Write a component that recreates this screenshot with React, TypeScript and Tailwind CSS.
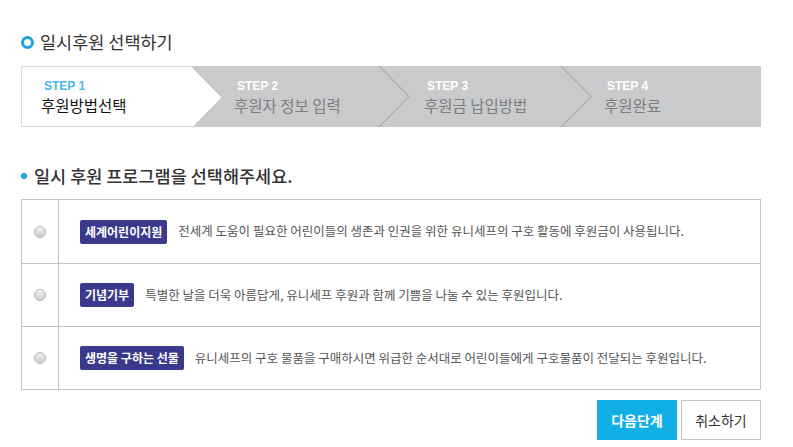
const steps = [
  { no: "STEP 1", label: "후원방법선택", active: true, width: "w-[172px]", pad: "pl-[19px]" },
  { no: "STEP 2", label: "후원자 정보 입력", active: false, width: "w-[187px]", pad: "pl-[41px]" },
  { no: "STEP 3", label: "후원금 납입방법", active: false, width: "w-[182px]", pad: "pl-[44px]" },
  { no: "STEP 4", label: "후원완료", active: false, width: "flex-1", pad: "pl-[42px]" },
];

const programs = [
  {
    badge: "세계어린이지원",
    text: "전세계 도움이 필요한 어린이들의 생존과 인권을 위한 유니세프의 구호 활동에 후원금이 사용됩니다.",
  },
  {
    badge: "기념기부",
    text: "특별한 날을 더욱 아름답게, 유니세프 후원과 함께 기쁨을 나눌 수 있는 후원입니다.",
  },
  {
    badge: "생명을 구하는 선물",
    text: "유니세프의 구호 물품을 구매하시면 위급한 순서대로 어린이들에게 구호물품이 전달되는 후원입니다.",
  },
];

function Chevron({ active }: { active: boolean }) {
  return (
    <svg
      className="absolute top-0 -right-[30px] z-10 h-[61px] w-[31px]"
      viewBox="0 0 31 61"
      preserveAspectRatio="none"
    >
      {active && <polygon points="0,0 30,30.5 0,61" fill="#ffffff" />}
      <polyline
        points="0,0 30,30.5 0,61"
        fill="none"
        stroke={active ? "#b9babc" : "#8c8d8f"}
        strokeWidth="0.8"
      />
    </svg>
  );
}

function Radio() {
  return (
    <span className="block h-[12px] w-[12px] rounded-full border border-[#b5b5b5] bg-gradient-to-b from-[#f2f2f2] to-[#cdcdcd]" />
  );
}

export default function App() {
  return (
    <main className="min-h-[447px] w-[793px] bg-white font-['Noto_Sans_CJK_KR','Noto_Sans',sans-serif] text-[#333]">
      <div className="ml-[21px] w-[740px] pt-[31px]">
        <h1 className="flex items-center gap-[6px] text-[17.5px] leading-[22px] text-[#333]">
          <span className="block h-[13px] w-[13px] rounded-full border-[3px] border-[#1aa3dc]" />
          일시후원 선택하기
        </h1>

        <div className="mt-[13px] flex h-[61px] bg-[#c9cacc]">
          {steps.map((s, i) => (
            <div
              key={s.no}
              className={`relative flex flex-col justify-center ${s.width} ${s.pad} ${
                s.active ? "border-y border-l border-[#dcdcdc] bg-white" : ""
              }`}
            >
              <span
                className={`ml-[3px] font-['Liberation_Sans',sans-serif] text-[12px] font-bold leading-[14px] ${
                  s.active ? "text-[#4cb6e6]" : "text-white"
                }`}
              >
                {s.no}
              </span>
              <span
                className={`mt-[3px] text-[15.5px] leading-[18px] ${
                  s.active ? "text-[#111]" : "text-[#7d7e80]"
                }`}
              >
                {s.label}
              </span>
              {i < steps.length - 1 && <Chevron active={s.active} />}
            </div>
          ))}
        </div>

        <h2 className="mt-[38px] flex items-center gap-[7px] text-[17.5px] font-medium leading-[22px] text-[#333]">
          <span className="block h-[6px] w-[6px] rounded-full bg-[#1aa3e0]" />
          일시 후원 프로그램을 선택해주세요.
        </h2>

        <div className="mt-[12px] border border-[#c4c4c4]">
          {programs.map((p, i) => (
            <div
              key={p.badge}
              className={`flex h-[63px] ${i > 0 ? "border-t border-[#c4c4c4]" : ""}`}
            >
              <div className="flex w-[37px] items-center justify-center border-r border-[#c4c4c4]">
                <Radio />
              </div>
              <div className="flex items-center pl-[21px]">
                <span className="rounded-[2px] bg-[#3a3a8c] px-[5px] text-[12px] font-bold leading-[24px] text-white">
                  {p.badge}
                </span>
                <span className="ml-[11px] text-[12.5px] text-[#555]">{p.text}</span>
              </div>
            </div>
          ))}
        </div>

        <div className="mt-[10px] flex justify-end gap-[4px]">
          <button className="h-[40px] w-[80px] bg-[#12aee6] text-[14px] font-bold text-white">
            다음단계
          </button>
          <button className="h-[40px] w-[80px] border border-[#c4c4c4] bg-white text-[14px] text-[#333]">
            취소하기
          </button>
        </div>
      </div>
    </main>
  );
}
